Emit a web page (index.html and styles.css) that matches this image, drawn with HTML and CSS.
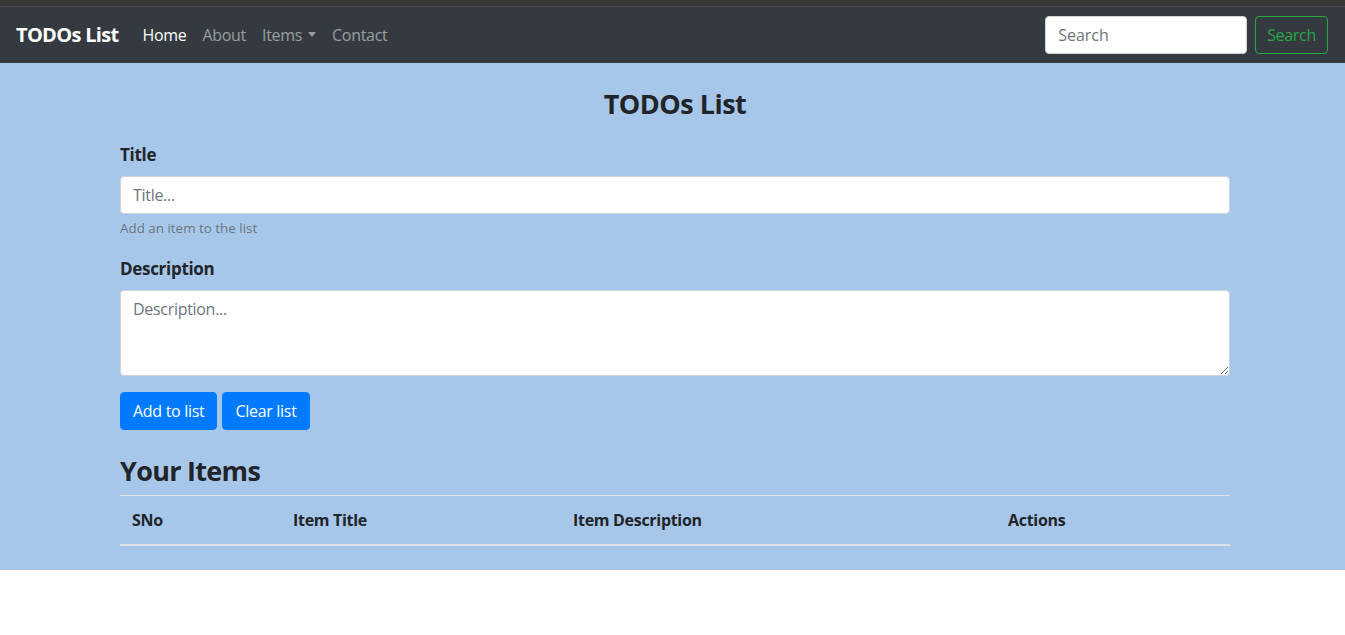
FILE: index.html
```html
<!DOCTYPE html>
<html lang="en">
<head>
<meta charset="utf-8">
<title>TODOs List</title>
<link rel="stylesheet" href="styles.css">
</head>
<body>
<div class="topbar"></div>
<nav class="navbar">
  <a class="brand" href="#">TODOs List</a>
  <ul class="nav">
    <li><a class="nav-link active" href="#">Home</a></li>
    <li><a class="nav-link" href="#">About</a></li>
    <li><a class="nav-link dropdown" href="#">Items</a></li>
    <li><a class="nav-link" href="#">Contact</a></li>
  </ul>
  <form class="search">
    <input class="search-input" type="search" placeholder="Search">
    <button class="btn-outline" type="button">Search</button>
  </form>
</nav>
<main class="page">
  <div class="container">
    <h2 class="page-title">TODOs List</h2>
    <div class="form-group">
      <label class="label" for="title">Title</label>
      <input class="form-control" id="title" type="text" placeholder="Title...">
      <small class="help">Add an item to the list</small>
    </div>
    <div class="form-group form-group-last">
      <label class="label" for="desc">Description</label>
      <textarea class="form-control textarea" id="desc" rows="3" placeholder="Description..."></textarea>
    </div>
    <div class="actions">
      <button class="btn-primary" type="button">Add to list</button>
      <button class="btn-primary" type="button">Clear list</button>
    </div>
    <h2 class="items-title">Your Items</h2>
    <table class="table">
      <thead>
        <tr>
          <th class="c1">SNo</th>
          <th class="c2">Item Title</th>
          <th class="c3">Item Description</th>
          <th class="c4">Actions</th>
        </tr>
      </thead>
      <tbody></tbody>
    </table>
  </div>
</main>
</body>
</html>
```

FILE: styles.css
```css
* { box-sizing: border-box; }
html, body {
  margin: 0;
  padding: 0;
  background: #fff;
  font-family: "Open Sans", "Noto Sans", Arial, sans-serif;
  font-size: 16px;
  line-height: 1.5;
  color: #212529;
}
.topbar {
  height: 7px;
  background: #383838;
  border-bottom: 1px solid #4a4a4a;
}
.navbar {
  height: 56px;
  background: #343a40;
  display: flex;
  align-items: center;
  padding: 0 17px 0 16px;
}
.brand {
  color: #fff;
  font-weight: 700;
  font-size: 20px;
  text-decoration: none;
  margin-right: 16px;
  letter-spacing: -0.7px;
  line-height: 30px;
}
.nav {
  display: flex;
  list-style: none;
  margin: 0;
  padding: 0;
  flex: 1;
}
.nav-link {
  display: block;
  padding: 8px;
  color: rgba(255,255,255,.5);
  text-decoration: none;
  letter-spacing: -0.3px;
}
.nav-link.active { color: #fff; }
.dropdown::after {
  content: "";
  display: inline-block;
  margin-left: 6px;
  vertical-align: 4px;
  border-top: 5px solid;
  border-left: 4.5px solid transparent;
  border-right: 4.5px solid transparent;
}
.search {
  display: flex;
  align-items: center;
  gap: 8px;
}
.search-input {
  width: 202px;
  height: 38px;
  padding: 6px 12px;
  font: inherit;
  border: 1px solid #ced4da;
  border-radius: 4px;
  background: #fff;
}
.search-input::placeholder, .form-control::placeholder { color: #6c757d; opacity: 1; }
.btn-outline {
  height: 38px;
  padding: 6px 11px;
  font: inherit;
  letter-spacing: -0.3px;
  color: #28a745;
  background: transparent;
  border: 1px solid #28a745;
  border-radius: 4px;
}
.page {
  background: #a7c7ea;
  padding: 24px 0 8px;
}
.container {
  width: 1110px;
  margin-left: 120px;
}
.page-title {
  margin: 0 0 21px;
  text-align: center;
  font-size: 27px;
  font-weight: 700;
  line-height: 34px;
  letter-spacing: -0.5px;
}
.form-group { margin-bottom: 18px; }
.form-group-last { margin-bottom: 16px; }
.label {
  display: block;
  font-weight: 700;
  font-size: 17px;
  line-height: 26px;
  margin-bottom: 8px;
  letter-spacing: -0.3px;
}
.form-control {
  display: block;
  width: 100%;
  height: 38px;
  padding: 6px 12px;
  font: inherit;
  color: #495057;
  background: #fff;
  border: 1px solid #ced4da;
  border-radius: 4px;
  letter-spacing: -0.3px;
}
.textarea {
  height: 86px;
  resize: vertical;
}
.help {
  display: block;
  margin-top: 5px;
  font-size: 13.4px;
  color: #6c757d;
  line-height: 19px;
}
.actions {
  display: flex;
  gap: 5px;
}
.btn-primary {
  height: 38px;
  padding: 6px 12px;
  font: inherit;
  letter-spacing: -0.3px;
  color: #fff;
  background: #007bff;
  border: 1px solid #007bff;
  border-radius: 4px;
}
.items-title {
  margin: 24px 0 7px;
  font-size: 27px;
  font-weight: 700;
  line-height: 34px;
  letter-spacing: -0.7px;
}
.table {
  width: 100%;
  border-collapse: collapse;
  margin-bottom: 16px;
}
.table th {
  text-align: left;
  padding: 12px;
  font-weight: 700;
  line-height: 24px;
  border-top: 1px solid #dee2e6;
  border-bottom: 2px solid #dee2e6;
  letter-spacing: -0.3px;
}
.c1 { width: 161px; }
.c2 { width: 280px; }
.c3 { width: 435px; }
.c4 { width: 234px; }
```
